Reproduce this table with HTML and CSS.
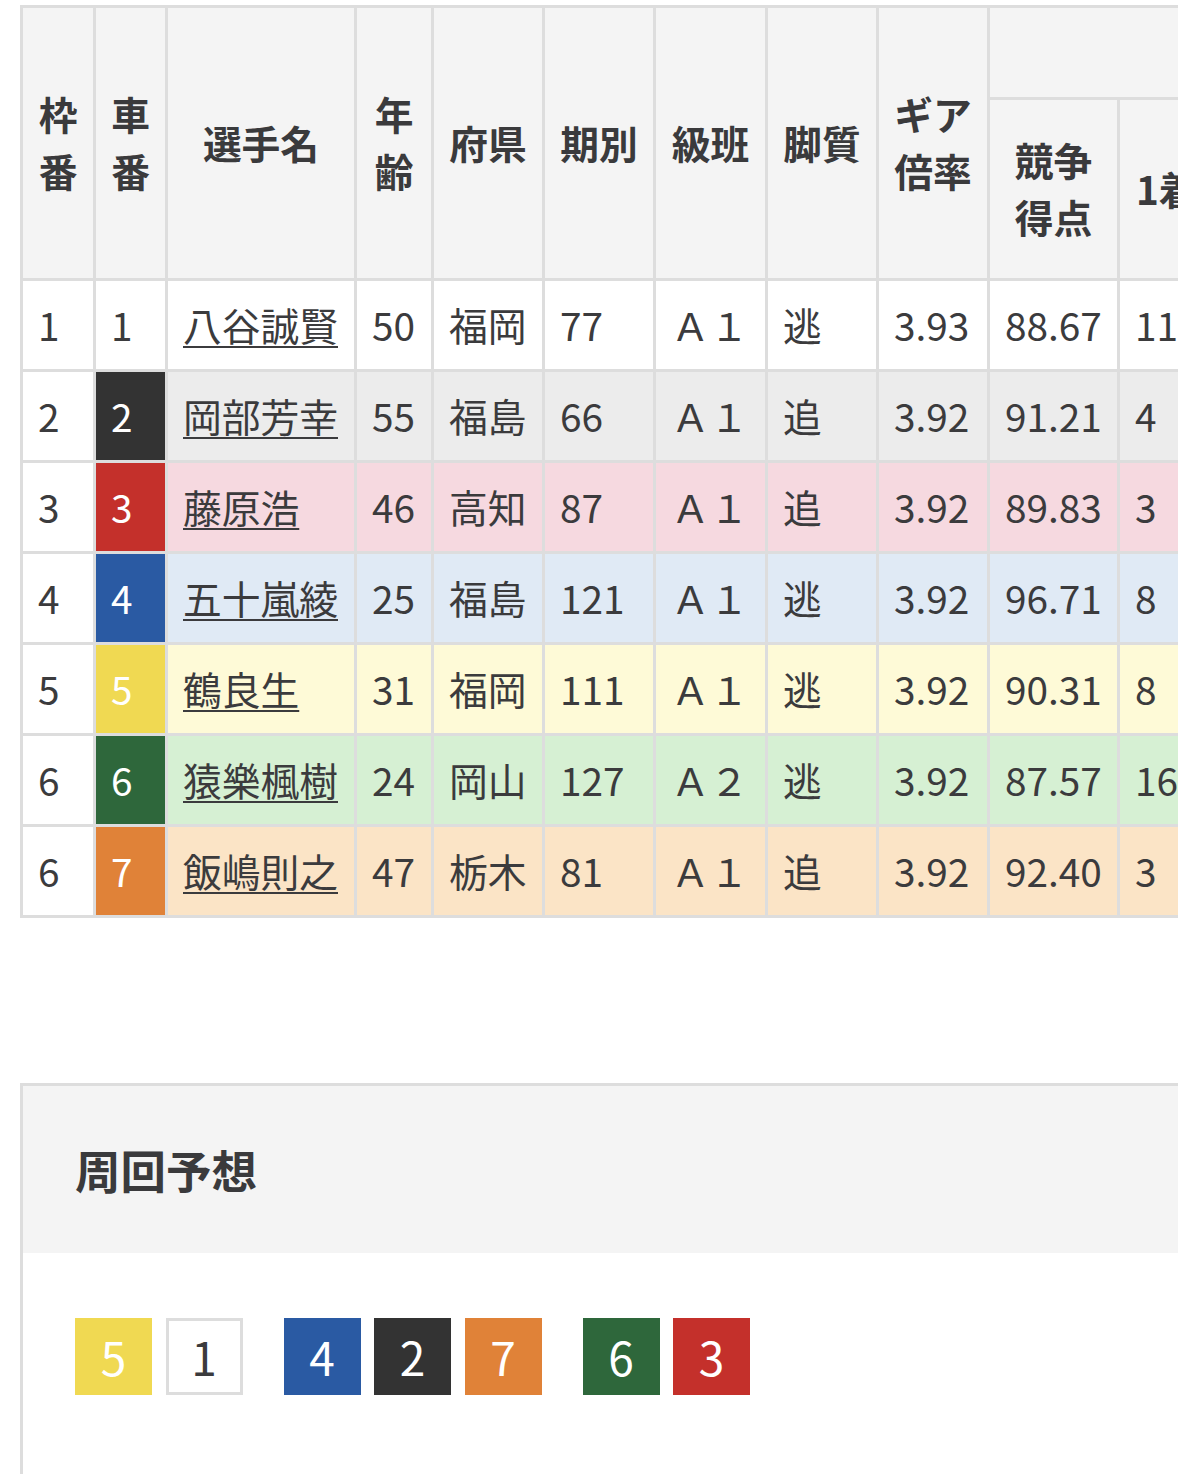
FILE: index.html
```html
<!DOCTYPE html>
<html lang="ja">
<head>
<meta charset="utf-8">
<title>出走表</title>
<link rel="stylesheet" href="styles.css">
</head>
<body>
<div class="page">
  <div class="content">
    <table class="entry">
      <colgroup>
        <col class="c-waku"><col class="c-sha"><col class="c-name"><col class="c-age"><col class="c-pref"><col class="c-term"><col class="c-class"><col class="c-style"><col class="c-gear"><col class="c-score"><col class="c-first">
      </colgroup>
      <thead>
        <tr>
          <th rowspan="2">枠番</th>
          <th rowspan="2">車番</th>
          <th rowspan="2">選手名</th>
          <th rowspan="2">年齢</th>
          <th rowspan="2">府県</th>
          <th rowspan="2">期別</th>
          <th rowspan="2">級班</th>
          <th rowspan="2">脚質</th>
          <th rowspan="2">ギア倍率</th>
          <th colspan="2" class="group">&nbsp;</th>
        </tr>
        <tr class="sub">
          <th>競争得点</th>
          <th class="first">1着</th>
        </tr>
      </thead>
      <tbody>
        <tr class="r1">
          <td class="waku">1</td><td class="car car1">1</td><td class="name"><a href="#">八谷誠賢</a></td><td>50</td><td>福岡</td><td>77</td><td>Ａ１</td><td>逃</td><td>3.93</td><td>88.67</td><td>11</td>
        </tr>
        <tr class="r2">
          <td class="waku">2</td><td class="car car2">2</td><td class="name"><a href="#">岡部芳幸</a></td><td>55</td><td>福島</td><td>66</td><td>Ａ１</td><td>追</td><td>3.92</td><td>91.21</td><td>4</td>
        </tr>
        <tr class="r3">
          <td class="waku">3</td><td class="car car3">3</td><td class="name"><a href="#">藤原浩</a></td><td>46</td><td>高知</td><td>87</td><td>Ａ１</td><td>追</td><td>3.92</td><td>89.83</td><td>3</td>
        </tr>
        <tr class="r4">
          <td class="waku">4</td><td class="car car4">4</td><td class="name"><a href="#">五十嵐綾</a></td><td>25</td><td>福島</td><td>121</td><td>Ａ１</td><td>逃</td><td>3.92</td><td>96.71</td><td>8</td>
        </tr>
        <tr class="r5">
          <td class="waku">5</td><td class="car car5">5</td><td class="name"><a href="#">鶴良生</a></td><td>31</td><td>福岡</td><td>111</td><td>Ａ１</td><td>逃</td><td>3.92</td><td>90.31</td><td>8</td>
        </tr>
        <tr class="r6">
          <td class="waku">6</td><td class="car car6">6</td><td class="name"><a href="#">猿樂楓樹</a></td><td>24</td><td>岡山</td><td>127</td><td>Ａ２</td><td>逃</td><td>3.92</td><td>87.57</td><td>16</td>
        </tr>
        <tr class="r7">
          <td class="waku">6</td><td class="car car7">7</td><td class="name"><a href="#">飯嶋則之</a></td><td>47</td><td>栃木</td><td>81</td><td>Ａ１</td><td>追</td><td>3.92</td><td>92.40</td><td>3</td>
        </tr>
      </tbody>
    </table>

    <section class="forecast">
      <div class="forecast-head">
        <h2>周回予想</h2>
      </div>
      <div class="forecast-body">
        <div class="line">
          <span class="tile car5">5</span>
          <span class="tile car1">1</span>
        </div>
        <div class="line">
          <span class="tile car4">4</span>
          <span class="tile car2">2</span>
          <span class="tile car7">7</span>
        </div>
        <div class="line">
          <span class="tile car6">6</span>
          <span class="tile car3">3</span>
        </div>
      </div>
    </section>
  </div>
</div>
</body>
</html>
```

FILE: styles.css
```css
* {
  box-sizing: border-box;
}

html, body {
  margin: 0;
  padding: 0;
  background: #ffffff;
}

body {
  font-family: "Noto Sans CJK JP", "Noto Sans", sans-serif;
  color: #3b3b3d;
}

.page {
  width: 1178px;
  overflow: hidden;
}

.content {
  width: 1400px;
  padding: 5px 0 0 20px;
}

/* ---------- entry table ---------- */
.entry {
  table-layout: fixed;
  width: 1303px;
  border-collapse: separate;
  border-spacing: 0;
  border-top: 3px solid #dddddd;
  border-right: 3px solid #dddddd;
  font-size: 38.75px;
  line-height: 57px;
}

.c-waku { width: 73px; }
.c-sha { width: 72px; }
.c-name { width: 189px; }
.c-age { width: 77px; }
.c-pref { width: 111px; }
.c-term { width: 111px; }
.c-class { width: 112px; }
.c-style { width: 111px; }
.c-gear { width: 111px; }
.c-score { width: 130px; }
.c-first { width: 203px; }

.entry th,
.entry td {
  border-left: 3px solid #dddddd;
  border-bottom: 3px solid #dddddd;
  vertical-align: middle;
}

.entry th {
  background: #f4f4f4;
  font-weight: 700;
  text-align: center;
  padding: 15px 14px 17px;
  color: #3a3a3c;
}

.entry .sub th {
  padding: 31px 14px 33px;
}

.entry .sub th.first {
  text-align: left;
  padding-left: 16px;
}

.entry td {
  text-align: left;
  padding: 15px 14px 16px 15px;
  background: #ffffff;
  white-space: nowrap;
}

.entry .name a {
  color: inherit;
  text-decoration: underline;
  text-decoration-thickness: 2px;
  text-underline-offset: 5px;
}

.r2 td { background: #ececec; }
.r3 td { background: #f6d9e0; }
.r4 td { background: #e0eaf5; }
.r5 td { background: #fefad7; }
.r6 td { background: #d6f0d3; }
.r7 td { background: #fbe4c6; }

.entry td.waku {
  background: #ffffff;
}

/* car colours (table cells and tiles) */
.entry td.car1, .car1 { background: #ffffff; color: #3b3b3d; }
.entry td.car2, .car2 { background: #333333; color: #ffffff; }
.entry td.car3, .car3 { background: #c4302b; color: #ffffff; }
.entry td.car4, .car4 { background: #2a5aa3; color: #ffffff; }
.entry td.car5, .car5 { background: #f0d952; color: #ffffff; }
.entry td.car6, .car6 { background: #2e673b; color: #ffffff; }
.entry td.car7, .car7 { background: #e08238; color: #ffffff; }

/* ---------- forecast box ---------- */
.forecast {
  margin-top: 165px;
  width: 1303px;
  border: 3px solid #dddddd;
}

.forecast-head {
  background: #f4f4f4;
  padding: 50px 52px 51px;
}

.forecast-head h2 {
  margin: 0;
  font-size: 45.5px;
  line-height: 66px;
  font-weight: 700;
  color: #3a3a3c;
}

.forecast-body {
  display: flex;
  gap: 41px;
  padding: 65px 52px 120px;
}

.line {
  display: flex;
  gap: 13.5px;
}

.tile {
  display: block;
  width: 77px;
  height: 77px;
  font-size: 46px;
  line-height: 77px;
  text-align: center;
}

.tile.car1 {
  border: 3px solid #dddddd;
  line-height: 71px;
}
```
